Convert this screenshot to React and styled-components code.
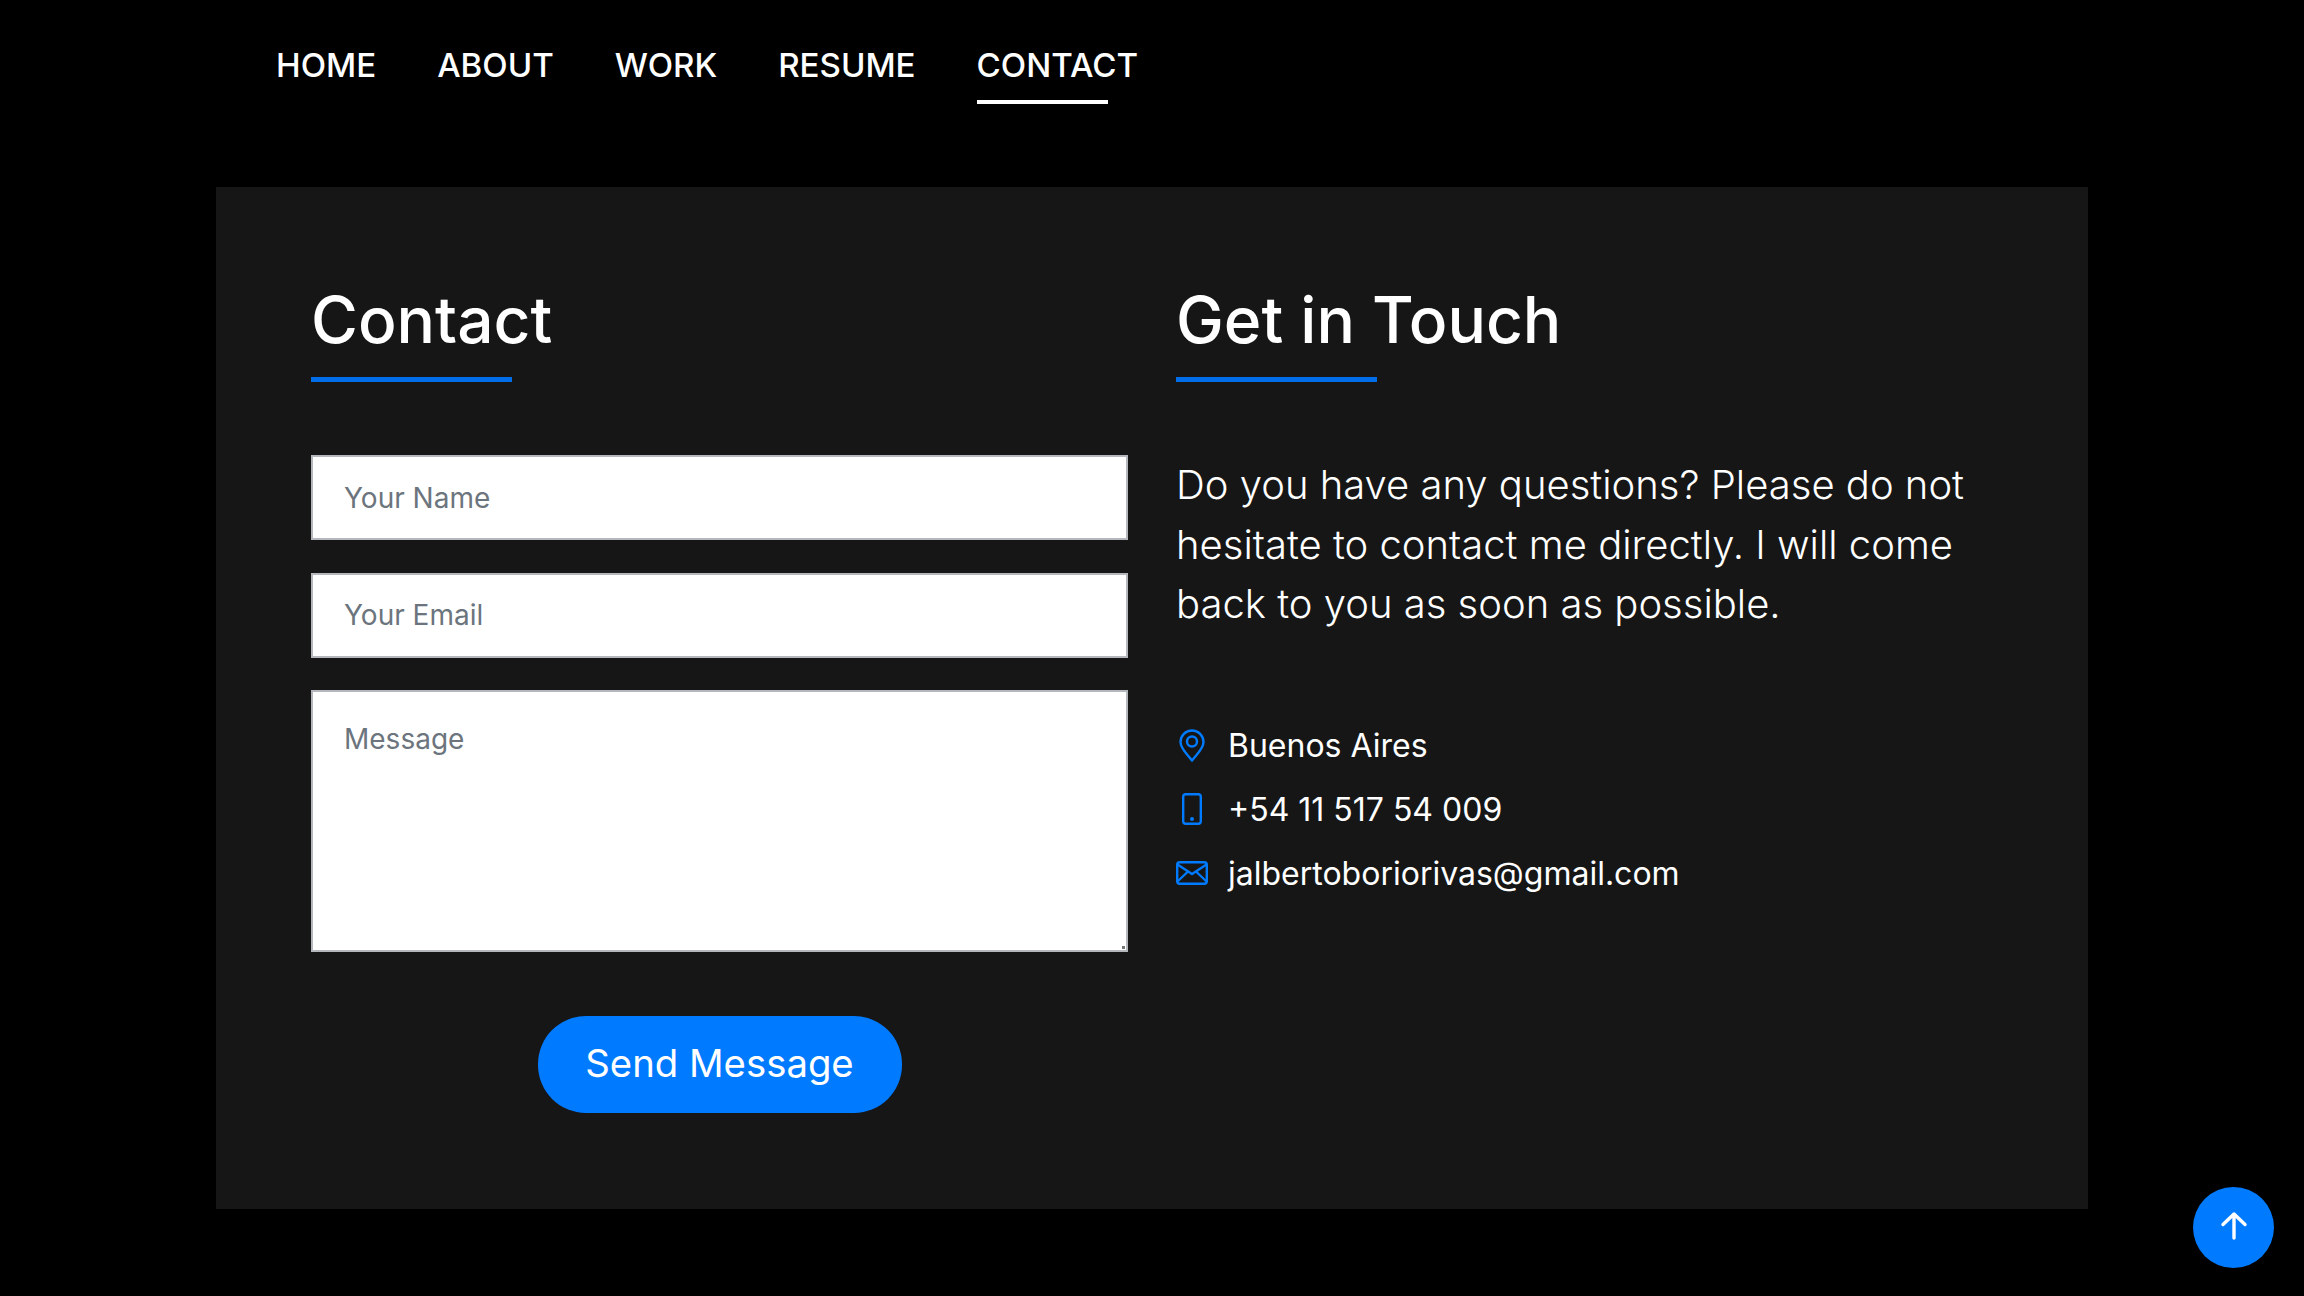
import React from 'react';
import styled, { createGlobalStyle } from 'styled-components';

const GlobalStyle = createGlobalStyle`
  html, body {
    margin: 0;
    padding: 0;
    background: #000;
    overflow: hidden;
  }
  * {
    box-sizing: border-box;
  }
`;

const Page = styled.div`
  width: 2304px;
  height: 1296px;
  background: #000;
  color: #fff;
  font-family: Inter, "Liberation Sans", sans-serif;
  padding: 0 216px;
`;

const Nav = styled.nav`
  display: flex;
  gap: 61px;
  height: 187px;
  padding: 40px 0 0 60px;
`;

const NavLink = styled.a`
  position: relative;
  height: 48px;
  font-size: 33.1px;
  line-height: 50px;
  font-weight: 550;
  color: #fff;
  text-decoration: none;

  ${(p) => p.$active && `
    &::after {
      content: '';
      position: absolute;
      left: 0;
      top: 60px;
      width: 131px;
      height: 4px;
      background: #fff;
    }
  `}
`;

const Panel = styled.main`
  height: 1022px;
  background: #161616;
  padding: 95px;
  display: grid;
  grid-template-columns: 817px 817px;
  column-gap: 48px;
  align-items: start;
`;

const Title = styled.h2`
  margin: 0;
  font-size: 64px;
  line-height: 76px;
  font-weight: 500;
  color: #fff;
  position: relative;
  height: 100px;

  &::after {
    content: '';
    position: absolute;
    left: 0;
    bottom: 0;
    width: 201px;
    height: 5px;
    background: #006ee8;
  }
`;

const Form = styled.form`
  margin-top: 73px;
  display: flex;
  flex-direction: column;
  gap: 32.5px;
`;

const Input = styled.input`
  display: block;
  width: 100%;
  height: 85px;
  padding: 0 31px;
  border: 2px solid #b4b8bc;
  border-radius: 0;
  background: #fff;
  font-family: inherit;
  font-size: 28px;
  color: #212529;
  outline: none;

  &::placeholder {
    color: #6c757d;
    opacity: 1;
  }
`;

const TextArea = styled.textarea`
  display: block;
  width: 100%;
  height: 262px;
  padding: 26px 31px;
  border: 2px solid #b4b8bc;
  border-radius: 0;
  background: #fff;
  font-family: inherit;
  font-size: 28px;
  line-height: 1.5;
  color: #212529;
  outline: none;

  &::placeholder {
    color: #6c757d;
    opacity: 1;
  }

  &::-webkit-resizer {
    background: linear-gradient(#777, #777) no-repeat right 1px bottom 1px / 3px 3px;
  }
`;

const ButtonRow = styled.div`
  display: flex;
  justify-content: center;
  margin-top: 31px;
`;

const SendButton = styled.button`
  width: 364px;
  height: 97px;
  padding: 0 0 2px;
  border: none;
  border-radius: 48px;
  background: #007bff;
  color: #fff;
  font-family: inherit;
  font-size: 38.3px;
  font-weight: 400;
`;

const Intro = styled.p`
  margin: 73px 0 0;
  font-size: 40px;
  line-height: 59.5px;
  font-weight: 300;
  color: #fff;
`;

const ContactList = styled.ul`
  list-style: none;
  margin: 79.5px 0 0;
  padding: 0;
  display: flex;
  flex-direction: column;
`;

const ContactRow = styled.li`
  display: flex;
  align-items: center;
  height: 64px;
  font-size: 32px;
  color: #fff;
`;

const IconBox = styled.span`
  width: 32px;
  margin-right: 20px;
  display: flex;
  justify-content: center;
  color: #007bff;
`;

const ScrollTop = styled.button`
  position: fixed;
  right: 30px;
  bottom: 28px;
  width: 81px;
  height: 81px;
  border: none;
  border-radius: 50%;
  background: #007bff;
  color: #fff;
  padding: 0 0 3px;
  display: flex;
  align-items: center;
  justify-content: center;
`;

const PinIcon = () => (
  <svg width="26" height="33" viewBox="0 0 26 33" fill="none" stroke="currentColor" strokeWidth="2.4">
    <path d="M13 31.5 C9 26 1.5 20 1.5 13 A11.5 11.5 0 0 1 24.5 13 C24.5 20 17 26 13 31.5 Z" strokeLinejoin="round" />
    <circle cx="13" cy="12.5" r="5" />
  </svg>
);

const PhoneIcon = () => (
  <svg width="20" height="32" viewBox="0 0 20 32" fill="none" stroke="currentColor" strokeWidth="2.4">
    <rect x="1.2" y="1.2" width="17.6" height="29.6" rx="2.5" />
    <circle cx="10" cy="26" r="2" fill="currentColor" stroke="none" />
  </svg>
);

const MailIcon = () => (
  <svg width="32" height="24" viewBox="0 0 32 24" fill="none" stroke="currentColor" strokeWidth="2.4">
    <rect x="1.2" y="1.2" width="29.6" height="21.6" rx="2.5" />
    <path d="M1.5 3.5 L16 13 L30.5 3.5 M1.5 20.5 L12 10.5 M30.5 20.5 L20 10.5" />
  </svg>
);

const ArrowUpIcon = () => (
  <svg width="28" height="30" viewBox="0 0 28 30" fill="none" stroke="currentColor" strokeWidth="3.4" strokeLinecap="round" strokeLinejoin="round">
    <path d="M14 27 L14 3 M3 13.5 L14 3 L25 13.5" />
  </svg>
);

const navItems = ['HOME', 'ABOUT', 'WORK', 'RESUME', 'CONTACT'];

const App = () => (
  <Page>
    <GlobalStyle />
    <Nav>
      {navItems.map((item) => (
        <NavLink key={item} href="#" $active={item === 'CONTACT'}>{item}</NavLink>
      ))}
    </Nav>
    <Panel>
      <section>
        <Title>Contact</Title>
        <Form onSubmit={(e) => e.preventDefault()}>
          <Input type="text" placeholder="Your Name" />
          <Input type="email" placeholder="Your Email" />
          <TextArea placeholder="Message" />
          <ButtonRow>
            <SendButton type="submit">Send Message</SendButton>
          </ButtonRow>
        </Form>
      </section>
      <section>
        <Title>Get in Touch</Title>
        <Intro>
          Do you have any questions? Please do not hesitate to contact me directly. I will come back to you as soon as possible.
        </Intro>
        <ContactList>
          <ContactRow><IconBox><PinIcon /></IconBox>Buenos Aires</ContactRow>
          <ContactRow><IconBox><PhoneIcon /></IconBox>+54 11 517 54 009</ContactRow>
          <ContactRow><IconBox><MailIcon /></IconBox>jalbertoboriorivas@gmail.com</ContactRow>
        </ContactList>
      </section>
    </Panel>
    <ScrollTop aria-label="Back to top"><ArrowUpIcon /></ScrollTop>
  </Page>
);

export default App;
